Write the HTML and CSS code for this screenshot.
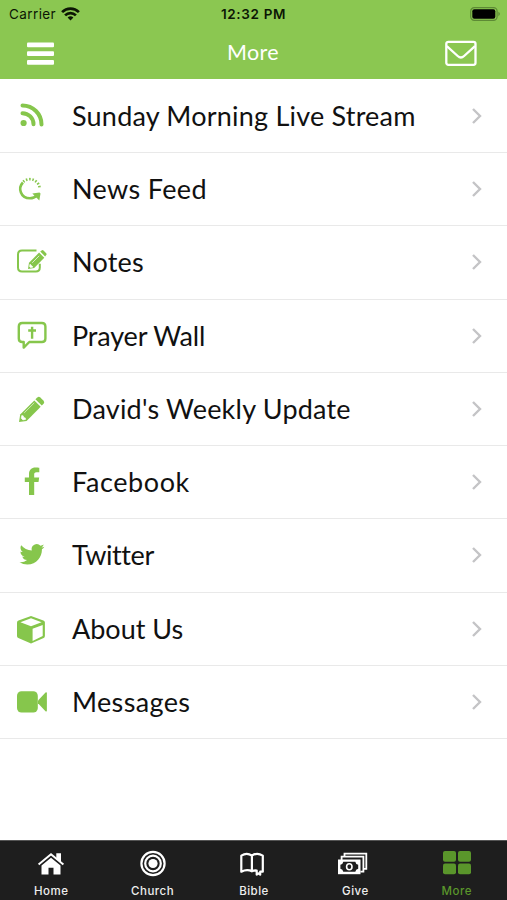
FILE: index.html
```html
<!DOCTYPE html>
<html lang="en">
<head>
    <meta charset="UTF-8">
    <meta name="viewport" content="width=device-width, initial-scale=1.0">
    <title>More</title>
    <link rel="stylesheet" href="styles.css">
</head>
<body>
    <div class="app">
        <!-- Header -->
        <header class="header">
            <div class="status-bar">
                <div class="carrier">
                    <span>Carrier</span>
                    <svg width="19" height="14" viewBox="0 0 19 14" fill="none" stroke="#0c1604" stroke-width="2.7">
                        <path d="M1.1 5.1a12 12 0 0 1 16.8 0"/>
                        <path d="M4.1 8.4a7.6 7.6 0 0 1 10.8 0"/>
                        <path d="M6.6 10.6a4.2 4.2 0 0 1 5.8 0L9.5 13.6z" fill="#0c1604" stroke="none"/>
                    </svg>
                </div>
                <div class="time">12:32 PM</div>
                <div class="battery">
                    <svg width="31" height="14" viewBox="0 0 31 14">
                        <rect x=".7" y=".7" width="26.4" height="12.6" rx="3.6" fill="none" stroke="#5d8a35" stroke-width="1.2"/>
                        <rect x="2.3" y="2.3" width="23" height="9.4" rx="2" fill="#000"/>
                        <path d="M28.4 4.8q3 2.2 0 4.4z" fill="#5d8a35"/>
                    </svg>
                </div>
            </div>
            <div class="nav-bar">
                <button class="nav-button" aria-label="Menu">
                    <svg width="27" height="23" viewBox="0 0 27 23" fill="#fff">
                        <rect y=".5" width="27" height="4.8" rx="1"/>
                        <rect y="9.2" width="27" height="4.8" rx="1"/>
                        <rect y="17.9" width="27" height="4.8" rx="1"/>
                    </svg>
                </button>
                <h1>More</h1>
                <button class="nav-button" aria-label="Inbox">
                    <svg width="32" height="26" viewBox="0 0 32 26" fill="none" stroke="#fff" stroke-width="2.3">
                        <rect x="1.3" y="1.8" width="29.2" height="23" rx="2"/>
                        <path d="M1.8 6.2l10.9 9.8q3.2 3 6.4 0L30 6.2"/>
                    </svg>
                </button>
            </div>
        </header>

        <!-- Menu -->
        <ul class="menu">
            <li class="menu-item">
                <svg class="icon" viewBox="0 0 32 32" fill="none" stroke="#86c64c" stroke-width="4" stroke-linecap="round">
                    <circle cx="7.6" cy="23" r="3.1" fill="#86c64c" stroke="none"/>
                    <path d="M6.5 13.2a11 11 0 0 1 11 11"/>
                    <path d="M6.5 5.4a19 19 0 0 1 19 19"/>
                </svg>
                <span class="label live">Sunday Morning Live Stream</span>
                <svg class="chevron" viewBox="0 0 12 18"><path d="M2 2l7 7-7 7"/></svg>
            </li>
            <li class="menu-item">
                <svg class="icon" viewBox="0 0 32 32" fill="none" stroke="#86c64c">
                    <path d="M6.9 9.5C1.7 15 4.5 25.3 14 25.3q4 0 7.2-3" stroke-width="2.6"/>
                    <path d="M7.3 8.8a9.7 9.7 0 0 1 16.2 5.6" stroke-width="2.7" stroke-dasharray="1.5 1.7"/>
                    <path d="M16.3 20.4l7.2-.8 1 .9-1.2 6.9z" fill="#86c64c" stroke="none"/>
                </svg>
                <span class="label feed">News Feed</span>
                <svg class="chevron" viewBox="0 0 12 18"><path d="M2 2l7 7-7 7"/></svg>
            </li>
            <li class="menu-item">
                <svg class="icon" viewBox="0 0 32 32">
                    <path d="M20.5 4.6H6q-4 0-4 4v12.9q0 4 4 4h13.8q4 0 4-4v-3.7" fill="none" stroke="#86c64c" stroke-width="2"/>
                    <path d="M12 22.9l1-6.2L23.1 6.6l5.2 5.2L18.2 22z" fill="#86c64c"/>
                    <path d="M24.2 5.5l1.4-1.1q1-.7 1.9.2l2.7 2.7q.8.9 0 1.8l-1.1 1.3z" fill="#86c64c"/>
                    <path d="M14 18.2l2.9 2.8-2.4.5-.9-.9zM16.2 16.8l7-7" fill="#fff" stroke="#fff" stroke-width=".7"/>
                </svg>
                <span class="label notes">Notes</span>
                <svg class="chevron" viewBox="0 0 12 18"><path d="M2 2l7 7-7 7"/></svg>
            </li>
            <li class="menu-item">
                <svg class="icon" viewBox="0 0 32 32" fill="none" stroke="#86c64c" stroke-width="2.4">
                    <path d="M6.3 3h19.6q3.5 0 3.500 3.500v12q0 3.500-3.500 3.500H13.300l-5.600 5.600V22H6.300q-3.500 0-3.500-3.500v-12q0-3.500 3.500-3.500z" stroke-linejoin="round"/>
                    <path d="M16.100 6.800v12M12.200 10.500H20"/>
                </svg>
                <span class="label prayer">Prayer Wall</span>
                <svg class="chevron" viewBox="0 0 12 18"><path d="M2 2l7 7-7 7"/></svg>
            </li>
            <li class="menu-item">
                <svg class="icon" viewBox="0 0 32 32" fill="#86c64c">
                    <path d="M3 29.100l1.200-7.600L18.300 7.400l6.400 6.400L10.600 27.900z"/>
                    <path d="M19.400 6.200l1.900-1.800q1.500-1.300 3 0l3.300 3.300q1.300 1.500 0 3l-1.800 1.900z"/>
                    <path d="M5.800 22.400l1.500.5.400 1.600 1.600.4.300 1.500-2.700.5-1.700-1.700zM8.200 19.900L18.300 9.800" fill="#fff" stroke="#fff" stroke-width=".6"/>
                </svg>
                <span class="label weekly">David's Weekly Update</span>
                <svg class="chevron" viewBox="0 0 12 18"><path d="M2 2l7 7-7 7"/></svg>
            </li>
            <li class="menu-item">
                <svg class="icon" viewBox="0 0 32 32" fill="#86c64c">
                    <path d="M23.300 1.700v4.600h-2.800c-1.900 0-2.300.9-2.300 2.300v2.800h5l-.7 4.500h-4.300v13h-5.200v-13H8.800v-4.500H13V7.900c0-4.100 2.600-6.500 6.400-6.500 1.700 0 3.200.1 3.900.3z"/>
                </svg>
                <span class="label facebook">Facebook</span>
                <svg class="chevron" viewBox="0 0 12 18"><path d="M2 2l7 7-7 7"/></svg>
            </li>
            <li class="menu-item">
                <svg class="icon" viewBox="0 0 32 32" fill="#86c64c">
                    <path transform="translate(3.500 2.900) scale(1.040)" d="M23.950 4.570a10 10 0 0 1-2.820.77 4.960 4.960 0 0 0 2.160-2.720c-.95.550-2 .95-3.130 1.180a4.920 4.920 0 0 0-8.380 4.480C7.690 8.090 4.070 6.130 1.640 3.160a4.820 4.820 0 0 0-.67 2.480c0 1.710.87 3.210 2.190 4.100a4.900 4.900 0 0 1-2.230-.62v.06a4.920 4.920 0 0 0 3.950 4.830 5 5 0 0 1-2.210.08 4.940 4.940 0 0 0 4.600 3.420A9.870 9.870 0 0 1 0 19.540a14 14 0 0 0 7.550 2.210c9.050 0 14-7.500 14-13.980v-.64a10 10 0 0 0 2.400-2.560z"/>
                </svg>
                <span class="label twitter">Twitter</span>
                <svg class="chevron" viewBox="0 0 12 18"><path d="M2 2l7 7-7 7"/></svg>
            </li>
            <li class="menu-item">
                <svg class="icon" viewBox="0 0 32 32" fill="#86c64c">
                    <path d="M15 3l12.400 4.500q1.500.6 1.500 2V23q0 1.300-1.200 2L15 30.600 2.300 25Q1 24.300 1 23V9.500q0-1.400 1.500-2z"/>
                    <path d="M15 5.300l10.600 3.900L15 13.200 4.400 9.200zM16.600 15.800l10.100-3.900v11.200l-10.100 4.800z" fill="#fff"/>
                </svg>
                <span class="label about">About Us</span>
                <svg class="chevron" viewBox="0 0 12 18"><path d="M2 2l7 7-7 7"/></svg>
            </li>
            <li class="menu-item">
                <svg class="icon" viewBox="0 0 32 32" fill="#86c64c">
                    <rect x="1" y="5.200" width="20.800" height="21.300" rx="4.500"/>
                    <path d="M22 14.500l7.500-8.100q1.400-.8 1.400.8v17.300q0 1.600-1.400.8L22 17.200z"/>
                </svg>
                <span class="label messages">Messages</span>
                <svg class="chevron" viewBox="0 0 12 18"><path d="M2 2l7 7-7 7"/></svg>
            </li>
        </ul>

        <!-- Tabs -->
        <nav class="tab-bar">
            <div class="tab">
                <svg viewBox="0 0 32 28" fill="#fff">
                    <path d="M6.500 15.600L16 7.700l9.500 7.900v8.900h-7v-6.700h-5v6.700h-7z"/>
                    <path d="M3.600 14.500L16 4.200l12.400 10.300" fill="none" stroke="#fff" stroke-width="2"/>
                    <path d="M21.300 3.200H26v9.500l-4.700-4z"/>
                </svg>
                <span>Home</span>
            </div>
            <div class="tab">
                <svg viewBox="0 0 32 28" fill="none" stroke="#fff" stroke-width="2.200">
                    <circle cx="16" cy="13.500" r="11.600"/>
                    <circle cx="16" cy="13.500" r="7.800"/>
                    <circle cx="16" cy="13.500" r="4.600" fill="#fff" stroke="none"/>
                </svg>
                <span>Church</span>
            </div>
            <div class="tab">
                <svg viewBox="0 0 32 28" fill="none" stroke="#fff" stroke-width="2.200">
                    <path d="M13.900 21.300Q9 18.700 3.300 21.700V5.600q5.500-3.500 10.600 0zM13.900 5.600q5.100-3.500 10.900 0v16.100h-2.600v3l-1.800-1.300-1.700 1.300v-4.200q-2.600-.3-4.800.8" stroke-linejoin="round"/>
                </svg>
                <span>Bible</span>
            </div>
            <div class="tab">
                <svg viewBox="0 0 32 28" fill="none" stroke="#fff" stroke-width="1.800">
                    <path d="M5.500 7.400V3.600h21.800v15.200h-2.200M2.600 10.200V6.700h21.800v15h-3"/>
                    <rect x="-1" y="9.500" width="22.500" height="14.700" fill="#fff" stroke="none"/>
                    <path d="M4.300 11.800h12q.4 2.600 2.900 3v4q-2.500.5-2.900 3h-12q-.4-2.500-2.900-3v-4q2.500-.4 2.900-3z" fill="#1e1e1e" stroke="none"/>
                    <ellipse cx="10.300" cy="16.800" rx="2.700" ry="3" stroke-width="1.600"/>
                </svg>
                <span>Give</span>
            </div>
            <div class="tab active">
                <svg viewBox="0 0 32 28" fill="#5a962b">
                    <rect x="2" y="1" width="13" height="10.800" rx="2"/>
                    <rect x="17" y="1" width="13" height="10.800" rx="2"/>
                    <rect x="2" y="13.500" width="13" height="10.800" rx="2"/>
                    <rect x="17" y="13.500" width="13" height="10.800" rx="2"/>
                </svg>
                <span>More</span>
            </div>
        </nav>
    </div>
</body>
</html>
```

FILE: styles.css
```css
* {
    box-sizing: border-box;
}

body {
    margin: 0;
    background: #ffffff;
    font-family: Lato, sans-serif;
    color: #111111;
}

.app {
    display: flex;
    flex-direction: column;
    height: 900px;
}

.header {
    height: 79px;
    background: #8bc751;
}

.status-bar {
    display: grid;
    grid-template-columns: 1fr auto 1fr;
    align-items: center;
    height: 27px;
    padding: 0 6px 0 9px;
    font-family: Inter, sans-serif;
    font-size: 13.5px;
    color: #0c1604;
}

.carrier {
    display: flex;
    align-items: center;
    gap: 5px;
    letter-spacing: 0.4px;
}

.time {
    padding-right: 3px;
    font-weight: 600;
    letter-spacing: 0.65px;
}

.battery {
    display: flex;
    justify-content: flex-end;
}

.nav-bar {
    display: flex;
    align-items: center;
    justify-content: space-between;
    height: 52px;
    padding: 0 30px 0 27px;
}

.nav-button {
    display: flex;
    padding: 0;
    border: none;
    background: none;
}

h1 {
    margin: 0;
    padding: 0 0 2px 7px;
    font-size: 21.5px;
    font-weight: 400;
    letter-spacing: 0.4px;
    color: #ffffff;
}

.menu {
    flex: 1;
    margin: 0;
    padding: 0.8px 0 0;
    list-style: none;
}

.menu-item {
    display: flex;
    align-items: center;
    height: 73.25px;
    padding: 0 24px 0 16px;
    border-bottom: 1.5px solid #e9e9e9;
}

.icon {
    width: 32px;
    height: 32px;
    margin-right: 24px;
}

.label {
    flex: 1;
    font-size: 27px;
    line-height: 34px;
    white-space: nowrap;
    font-variant-ligatures: none;
}

.live,
.notes,
.weekly {
    letter-spacing: 0.21px;
}

.feed,
.messages {
    letter-spacing: 0.35px;
}

.prayer {
    letter-spacing: -0.15px;
}

.facebook {
    letter-spacing: 0.6px;
}

.twitter {
    letter-spacing: -0.4px;
}

.chevron {
    width: 12px;
    height: 18px;
    fill: none;
    stroke: #c4c4c6;
    stroke-width: 2.4;
}

.tab-bar {
    display: grid;
    grid-template-columns: repeat(5, 1fr);
    height: 60px;
    background: #1e1e1e;
    border-top: 1px solid #555555;
}

.tab {
    display: flex;
    flex-direction: column;
    align-items: center;
    padding: 9px 0 0 1px;
    color: #eeeeee;
    font-family: Inter, sans-serif;
    font-size: 11.5px;
    font-weight: 500;
    line-height: 14px;
    letter-spacing: 0.5px;
}

.tab svg {
    width: 32px;
    height: 28px;
    margin-bottom: 6px;
    overflow: visible;
}

.tab.active {
    color: #5a962b;
}
```
